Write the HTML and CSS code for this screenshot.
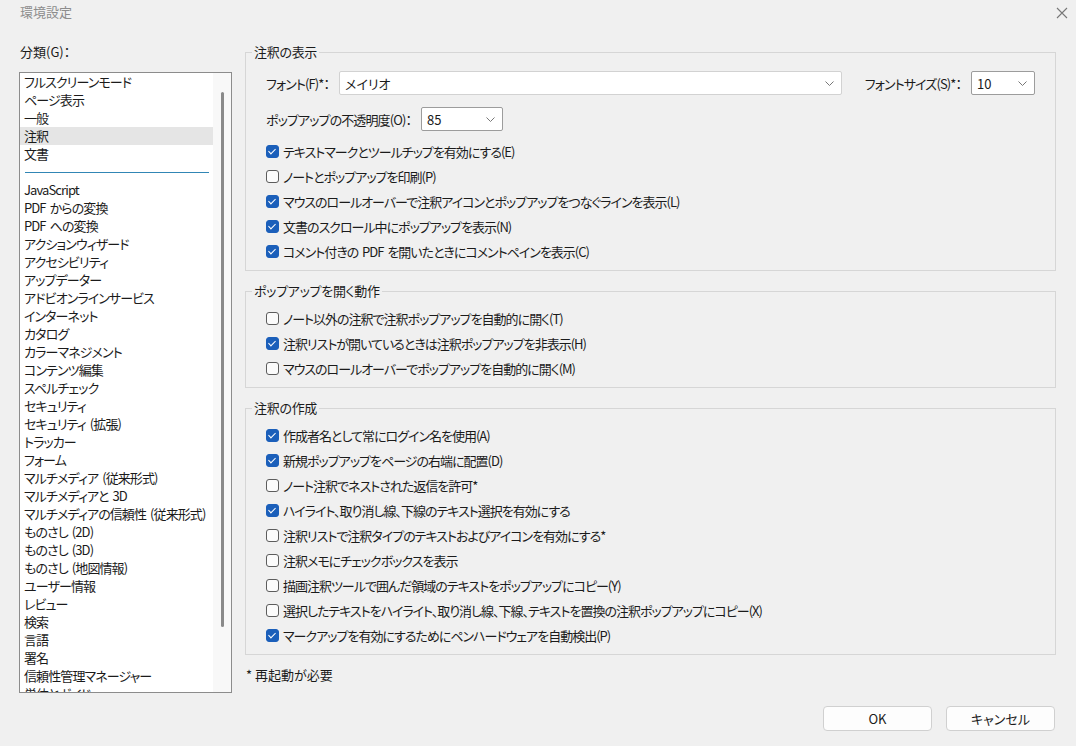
FILE: index.html
```html
<!DOCTYPE html>
<html lang="ja">
<head>
    <meta charset="UTF-8">
    <title>環境設定</title>
    <link rel="stylesheet" href="styles.css">
</head>
<body>
    <div class="dialog">
        <div class="titlebar">
            <span class="title">環境設定</span>
            <svg class="close" width="12" height="12" viewBox="0 0 12 12">
                <path d="M1 1 L11 11 M11 1 L1 11" stroke="#777" stroke-width="1.1" fill="none"/>
            </svg>
        </div>

        <div class="main">
            <div class="sidebar">
                <div class="side-label">分類(G)：</div>
                <div class="listbox">
                    <ul class="list">
                        <li>フルスクリーンモード</li>
                        <li>ページ表示</li>
                        <li>一般</li>
                        <li class="selected">注釈</li>
                        <li>文書</li>
                        <li class="sep"><span></span></li>
                        <li>JavaScript</li>
                        <li>PDF からの変換</li>
                        <li>PDF への変換</li>
                        <li>アクションウィザード</li>
                        <li>アクセシビリティ</li>
                        <li>アップデーター</li>
                        <li>アドビオンラインサービス</li>
                        <li>インターネット</li>
                        <li>カタログ</li>
                        <li>カラーマネジメント</li>
                        <li>コンテンツ編集</li>
                        <li>スペルチェック</li>
                        <li>セキュリティ</li>
                        <li>セキュリティ (拡張)</li>
                        <li>トラッカー</li>
                        <li>フォーム</li>
                        <li>マルチメディア (従来形式)</li>
                        <li>マルチメディアと 3D</li>
                        <li>マルチメディアの信頼性 (従来形式)</li>
                        <li>ものさし (2D)</li>
                        <li>ものさし (3D)</li>
                        <li>ものさし (地図情報)</li>
                        <li>ユーザー情報</li>
                        <li>レビュー</li>
                        <li>検索</li>
                        <li>言語</li>
                        <li>署名</li>
                        <li>信頼性管理マネージャー</li>
                        <li>単位とガイド</li>
                    </ul>
                    <div class="scrollbar"><div class="thumb"></div></div>
                </div>
            </div>

            <div class="content">
                <fieldset class="group">
                    <legend>注釈の表示</legend>
                    <div class="row font-row">
                        <span class="label">フォント(F)*：</span>
                        <div class="select wide light">
                            <span>メイリオ</span>
                            <svg class="chev" width="9" height="5" viewBox="0 0 9 5"><path d="M0.5 0.5 L4.5 4.5 L8.5 0.5" stroke="#777" fill="none"/></svg>
                        </div>
                        <span class="label size-label">フォントサイズ(S)*：</span>
                        <div class="select size">
                            <span>10</span>
                            <svg class="chev" width="9" height="5" viewBox="0 0 9 5"><path d="M0.5 0.5 L4.5 4.5 L8.5 0.5" stroke="#777" fill="none"/></svg>
                        </div>
                    </div>
                    <div class="row opacity-row">
                        <span class="label">ポップアップの不透明度(O)：</span>
                        <div class="select opacity">
                            <span>85</span>
                            <svg class="chev" width="9" height="5" viewBox="0 0 9 5"><path d="M0.5 0.5 L4.5 4.5 L8.5 0.5" stroke="#777" fill="none"/></svg>
                        </div>
                    </div>
                    <div class="checks first">
                        <div class="check on"><i></i>テキストマークとツールチップを有効にする(E)</div>
                        <div class="check"><i></i>ノートとポップアップを印刷(P)</div>
                        <div class="check on"><i></i>マウスのロールオーバーで注釈アイコンとポップアップをつなぐラインを表示(L)</div>
                        <div class="check on"><i></i>文書のスクロール中にポップアップを表示(N)</div>
                        <div class="check on"><i></i>コメント付きの PDF を開いたときにコメントペインを表示(C)</div>
                    </div>
                </fieldset>

                <fieldset class="group">
                    <legend>ポップアップを開く動作</legend>
                    <div class="checks">
                        <div class="check"><i></i>ノート以外の注釈で注釈ポップアップを自動的に開く(T)</div>
                        <div class="check on"><i></i>注釈リストが開いているときは注釈ポップアップを非表示(H)</div>
                        <div class="check"><i></i>マウスのロールオーバーでポップアップを自動的に開く(M)</div>
                    </div>
                </fieldset>

                <fieldset class="group">
                    <legend>注釈の作成</legend>
                    <div class="checks">
                        <div class="check on"><i></i>作成者名として常にログイン名を使用(A)</div>
                        <div class="check on"><i></i>新規ポップアップをページの右端に配置(D)</div>
                        <div class="check"><i></i>ノート注釈でネストされた返信を許可*</div>
                        <div class="check on"><i></i>ハイライト、取り消し線、下線のテキスト選択を有効にする</div>
                        <div class="check"><i></i>注釈リストで注釈タイプのテキストおよびアイコンを有効にする*</div>
                        <div class="check"><i></i>注釈メモにチェックボックスを表示</div>
                        <div class="check"><i></i>描画注釈ツールで囲んだ領域のテキストをポップアップにコピー(Y)</div>
                        <div class="check"><i></i>選択したテキストをハイライト、取り消し線、下線、テキストを置換の注釈ポップアップにコピー(X)</div>
                        <div class="check on"><i></i>マークアップを有効にするためにペンハードウェアを自動検出(P)</div>
                    </div>
                </fieldset>

                <p class="note">* 再起動が必要</p>
            </div>
        </div>

        <div class="footer">
            <button>OK</button>
            <button>キャンセル</button>
        </div>
    </div>
</body>
</html>
```

FILE: styles.css
```css
* {
    box-sizing: border-box;
    margin: 0;
    padding: 0;
}

body {
    width: 1076px;
    height: 746px;
    overflow: hidden;
    background: #f0f0f0;
    color: #1b1b1b;
    font-family: "Noto Sans CJK JP", "Noto Sans", sans-serif;
    font-size: 13px;
    font-feature-settings: "palt";
}

.titlebar {
    height: 24px;
    display: flex;
    align-items: center;
    justify-content: space-between;
    padding: 0 8px 0 20px;
}

.title {
    color: #8c8c8c;
    line-height: 24px;
}

.close {
    margin-top: 1px;
}

.main {
    display: flex;
    gap: 13px;
    margin-top: 19px;
    padding-left: 19px;
}

.sidebar {
    width: 213px;
}

.side-label {
    line-height: 18px;
    padding-left: 1px;
    margin-bottom: 11px;
}

.listbox {
    height: 621px;
    display: flex;
    background: #fff;
    border: 1px solid #8c8c8c;
    overflow: hidden;
}

.list {
    flex: 1;
    min-width: 0;
    list-style: none;
    letter-spacing: -0.9px;
    word-spacing: 2px;
}

.list li {
    height: 18px;
    line-height: 18px;
    padding-left: 4px;
    white-space: nowrap;
    overflow: hidden;
}

.list li.selected {
    background: #e5e5e5;
}

.list li.sep {
    display: flex;
    align-items: center;
    padding: 0 4px 0 5px;
}

.list li.sep span {
    flex: 1;
    height: 1px;
    background: #3186b5;
}

.scrollbar {
    width: 18px;
    flex-shrink: 0;
    background: #f8f8f8;
    padding-top: 19px;
    display: flex;
    justify-content: center;
}

.thumb {
    width: 3px;
    height: 535px;
    border-radius: 2px;
    background: #8a8a8a;
}

.content {
    width: 811px;
}

.group {
    border: 1px solid #d6d6d6;
    padding: 0 20px 6px 20px;
    margin-bottom: 11px;
    min-width: 0;
}

.group legend {
    margin-left: -14px;
    padding: 0 2px;
    line-height: 18px;
    letter-spacing: -0.3px;
}

.checks {
    padding-top: 6px;
}

.checks.first {
    padding-top: 8px;
}

.row {
    display: flex;
    align-items: center;
    height: 24px;
}

.font-row {
    margin-top: 10px;
}

.opacity-row {
    margin-top: 12px;
}

.label {
    white-space: nowrap;
    margin-right: 10px;
    letter-spacing: -0.9px;
}

.size-label {
    margin-left: 23px;
}

.select {
    height: 24px;
    display: flex;
    align-items: center;
    justify-content: space-between;
    background: #fff;
    border: 1px solid #9c9c9c;
    border-radius: 2px;
    padding: 0 7px 0 5px;
}

.select.light {
    border-color: #d2d2d2;
}

.select.wide {
    flex: 1;
}

.select.size {
    width: 64px;
}

.select.opacity {
    width: 82px;
}

.check {
    height: 25px;
    display: flex;
    align-items: center;
    white-space: nowrap;
    letter-spacing: -1px;
    word-spacing: 2px;
}

.check i {
    width: 13px;
    height: 13px;
    margin: 0 4px 0 0;
    border: 1px solid #5c5c5c;
    border-radius: 3px;
    background: #fbfbfb;
    flex-shrink: 0;
    position: relative;
}

.check.on i {
    background: #1b5fba;
    border-color: #1b5fba;
}

.check.on i::after {
    content: "";
    position: absolute;
    left: 3px;
    top: 1px;
    width: 3px;
    height: 6px;
    border: solid #fff;
    border-width: 0 1.5px 1.5px 0;
    transform: rotate(45deg);
}

.note {
    line-height: 18px;
    padding-left: 1px;
}

.footer {
    display: flex;
    justify-content: flex-end;
    gap: 14px;
    padding-right: 21px;
    margin-top: 13px;
}

button {
    width: 109px;
    height: 25px;
    background: #fdfdfd;
    border: 1px solid #d0d0d0;
    border-radius: 4px;
    font-family: inherit;
    font-size: 13px;
    color: #1b1b1b;
    font-feature-settings: "palt";
}
```
